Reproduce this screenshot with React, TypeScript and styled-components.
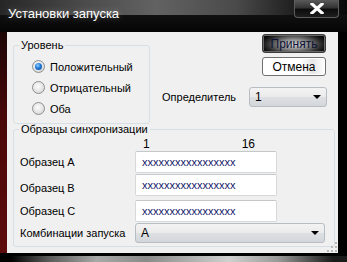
import React from 'react';
import styled, { createGlobalStyle } from 'styled-components';

const GlobalStyle = createGlobalStyle`
  html, body {
    margin: 0;
    padding: 0;
    background: #000;
  }
  body {
    font-family: 'Liberation Sans', Arial, sans-serif;
  }
`;

const Window = styled.div`
  width: 347px;
  height: 262px;
  background: #000;
  display: flex;
  flex-direction: column;
  overflow: hidden;
`;

const TitleBar = styled.div`
  height: 32px;
  flex: none;
  display: flex;
  align-items: flex-start;
  background:
    linear-gradient(to right, #262626 0%, #4c4c4c 25%, #626262 45%, #4a4a4a 68%, #1c1c1c 86%, #0a0a0a 100%) top / 100% 15px no-repeat,
    linear-gradient(to bottom, #1a1a1a, #050505);
`;

const Title = styled.div`
  flex: 1;
  padding: 6px 0 0 8px;
  color: #fff;
  font-size: 13px;
  line-height: 15px;
  text-shadow: 0 0 6px rgba(255, 255, 255, 0.35);
`;

const CloseButton = styled.div`
  width: 45px;
  height: 18px;
  margin-right: 8px;
  box-sizing: border-box;
  border: 1px solid #5c5c5c;
  border-top: none;
  border-radius: 0 0 4px 4px;
  background: linear-gradient(to bottom, #5a5a5a 0%, #333 45%, #0c0c0c 55%, #1e1e1e 100%);
  display: flex;
  align-items: center;
  justify-content: center;
`;

const Body = styled.div`
  flex: none;
  height: 221px;
  display: flex;
`;

const LeftFrame = styled.div`
  width: 7px;
  background: linear-gradient(to bottom, #1c0505, #4a0808 40%, #5e0b0b 100%);
`;

const RightFrame = styled.div`
  width: 9px;
  background: #000;
`;

const Client = styled.div`
  position: relative;
  flex: 1;
  background: #f0f0f0;
  box-sizing: border-box;
  padding: 2px 3px 0 6px;
  font-size: 11px;
  color: #000;
`;

const BottomStrip = styled.div`
  flex: 1;
  display: flex;
  flex-direction: column;
  justify-content: flex-end;
`;

const Streak = styled.div`
  height: 6px;
  background: linear-gradient(to right, #000 3%, #5a5a5a 14%, #a8a8a8 28%, #8a8a8a 42%, #d0d0d0 66%, #9a9a9a 80%, #1a1a1a 96%);
`;

const TopRow = styled.div`
  display: flex;
  align-items: flex-start;
`;

const Group = styled.fieldset<{ $width?: number }>`
  margin: 0;
  min-width: 0;
  box-sizing: border-box;
  width: ${p => (p.$width ? `${p.$width}px` : 'auto')};
  border: 1px solid #d5dfe5;
  border-radius: 3px;
  padding: 0;
`;

const Legend = styled.legend`
  margin-left: 5px;
  padding: 0 2px;
  font-size: 11px;
  line-height: 14px;
`;

const LevelGroup = styled(Group)`
  margin-top: 4px;
`;

const RadioList = styled.div`
  padding: 4px 0 4px 18px;
`;

const RadioRow = styled.label`
  height: 21px;
  display: flex;
  align-items: center;
  gap: 5px;
`;

const RadioDot = styled.span<{ $checked?: boolean }>`
  width: 13px;
  height: 13px;
  box-sizing: border-box;
  border-radius: 50%;
  border: 1px solid #8e8f8f;
  background: radial-gradient(circle at 45% 40%, #fdfdfd 0%, #e6e6e6 50%, #c9cbcd 100%);
  display: flex;
  align-items: center;
  justify-content: center;

  &::after {
    content: '';
    width: 7px;
    height: 7px;
    border-radius: 50%;
    display: ${p => (p.$checked ? 'block' : 'none')};
    background: radial-gradient(circle at 40% 35%, #8fd0ff 0%, #1f7ad8 45%, #0b3f8a 100%);
  }
`;

const RightCol = styled.div`
  flex: 1;
  display: flex;
  flex-direction: column;
`;

const ButtonStack = styled.div`
  align-self: flex-end;
  margin-right: 9px;
  display: flex;
  flex-direction: column;
  gap: 4px;
`;

const Button = styled.div<{ $primary?: boolean }>`
  width: 64px;
  height: 19px;
  box-sizing: border-box;
  border-radius: 3px;
  display: flex;
  align-items: center;
  justify-content: center;
  font-size: 12px;
  border: 1px solid ${p => (p.$primary ? '#3a3a3a' : '#707070')};
  color: ${p => (p.$primary ? '#0d1236' : '#000')};
  background: ${p =>
    p.$primary
      ? 'radial-gradient(ellipse 55% 75% at 50% 55%, #d8d8d8 0%, #8a8a8a 40%, #2a2a2a 80%, #050505 100%)'
      : 'linear-gradient(to right, #fff 0%, #fff 60%, #e6e6e6 80%, #fff 100%)'};
  box-shadow: ${p => (p.$primary ? 'inset 0 0 0 1px #6a6a6a' : 'inset 0 0 0 1px #fff')};
`;

const DividerRow = styled.div`
  margin-top: 11px;
  padding-left: 12px;
  margin-right: 8px;
  display: flex;
  align-items: center;
  justify-content: space-between;
`;

const Select = styled.div<{ $width: number }>`
  width: ${p => p.$width}px;
  height: 20px;
  box-sizing: border-box;
  border: 1px solid #b8bdc2;
  border-radius: 3px;
  background: linear-gradient(to bottom, #f3f3f3 0%, #ebebeb 48%, #dde0e3 52%, #d3d7db 100%);
  display: flex;
  align-items: center;
  justify-content: space-between;
  padding: 0 5px 0 5px;
  font-size: 12px;
`;

const Arrow = styled.span`
  width: 0;
  height: 0;
  border-left: 4px solid transparent;
  border-right: 4px solid transparent;
  border-top: 4px solid #000;
`;

const SyncGroup = styled(Group)`
  margin-top: -2px;
`;

const SyncGrid = styled.div`
  display: grid;
  grid-template-columns: 115px auto;
  justify-content: start;
  padding: 0 0 3px 6px;
`;

const Header = styled.div`
  grid-column: 2;
  height: 15px;
  width: 142px;
  line-height: 13px;
  font-size: 12px;
`;

const HeaderNums = styled.div`
  display: flex;
  padding: 2px 0 0 8px;
  width: 112px;
  justify-content: space-between;
`;

const RowLabel = styled.div<{ $gap?: number; $drop?: number }>`
  display: flex;
  align-items: center;
  margin-top: ${p => p.$gap || 0}px;
  padding-top: ${p => p.$drop || 0}px;
`;

const TextBox = styled.div<{ $gap?: number }>`
  width: 142px;
  height: 22px;
  margin-top: ${p => p.$gap || 0}px;
  box-sizing: border-box;
  border: 1px solid #d6d8da;
  border-top-color: #c5c8cb;
  border-radius: 2px;
  background: #fff;
  display: flex;
  align-items: center;
  padding-left: 6px;
  font-size: 11px;
  color: #14206a;
`;

const ComboCell = styled.div`
  margin-top: 1px;
`;

const Grip = styled.svg`
  position: absolute;
  right: 0;
  bottom: 0;
`;

const levels = ['Положительный', 'Отрицательный', 'Оба'];
const samples = [
  { name: 'Образец A', gap: 0, drop: 0 },
  { name: 'Образец B', gap: 1, drop: 6 },
  { name: 'Образец C', gap: 4, drop: 0 },
];
const pattern = 'xxxxxxxxxxxxxxxxx';

export default function App() {
  return (
    <Window>
      <GlobalStyle />
      <TitleBar>
        <Title>Установки запуска</Title>
        <CloseButton>
          <svg width="14" height="11" viewBox="0 0 14 11">
            <path d="M2 1 L12 10 M12 1 L2 10" stroke="#fff" strokeWidth="3.2" strokeLinecap="square" />
          </svg>
        </CloseButton>
      </TitleBar>
      <Body>
        <LeftFrame />
        <Client>
          <TopRow>
            <LevelGroup $width={137}>
              <Legend>Уровень</Legend>
              <RadioList>
                {levels.map((l, i) => (
                  <RadioRow key={l}>
                    <RadioDot $checked={i === 0} />
                    {l}
                  </RadioRow>
                ))}
              </RadioList>
            </LevelGroup>
            <RightCol>
              <ButtonStack>
                <Button $primary>Принять</Button>
                <Button>Отмена</Button>
              </ButtonStack>
              <DividerRow>
                <span>Определитель</span>
                <Select $width={78}>
                  1
                  <Arrow />
                </Select>
              </DividerRow>
            </RightCol>
          </TopRow>
          <SyncGroup>
            <Legend>Образцы синхронизации</Legend>
            <SyncGrid>
              <Header>
                <HeaderNums>
                  <span>1</span>
                  <span>16</span>
                </HeaderNums>
              </Header>
              {samples.map(s => (
                <React.Fragment key={s.name}>
                  <RowLabel $gap={s.gap} $drop={s.drop}>{s.name}</RowLabel>
                  <TextBox $gap={s.gap}>{pattern}</TextBox>
                </React.Fragment>
              ))}
              <RowLabel $gap={1}>Комбинации запуска</RowLabel>
              <ComboCell>
                <Select $width={190}>
                  A
                  <Arrow />
                </Select>
              </ComboCell>
            </SyncGrid>
          </SyncGroup>
          <Grip width="11" height="11" viewBox="0 0 11 11">
            {[[8, 0], [8, 4], [4, 4], [8, 8], [4, 8], [0, 8]].map(([x, y]) => (
              <rect key={`${x}-${y}`} x={x} y={y} width="2" height="2" fill="#b8b8b8" />
            ))}
          </Grip>
        </Client>
        <RightFrame />
      </Body>
      <BottomStrip>
        <Streak />
      </BottomStrip>
    </Window>
  );
}
